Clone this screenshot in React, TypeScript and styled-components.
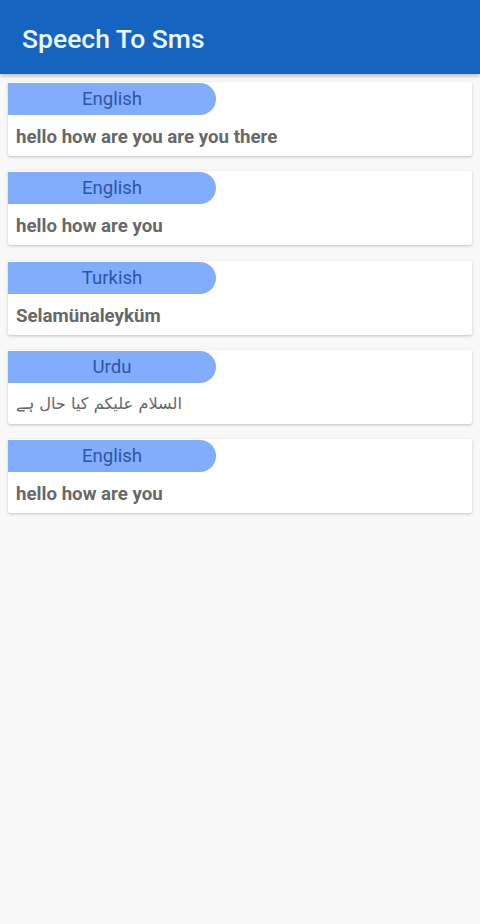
import React from 'react';
import styled, { createGlobalStyle } from 'styled-components';

const GlobalStyle = createGlobalStyle`
  body {
    margin: 0;
    background-color: #f8f8f8;
    font-family: Roboto, "Noto Sans", sans-serif;
  }
`;

const Page = styled.div`
  width: 480px;
  min-height: 924px;
  background-color: #f8f8f8;
`;

const AppBar = styled.header`
  height: 74px;
  display: flex;
  align-items: center;
  padding-left: 22px;
  padding-top: 3px;
  box-sizing: border-box;
  background-color: #1565c0;
  box-shadow: 0 2px 4px rgba(0, 0, 0, 0.25);
  position: relative;
`;

const Title = styled.h1`
  margin: 0;
  font-size: 26.5px;
  font-weight: 500;
  color: #eef6ff;
`;

const List = styled.div`
  display: flex;
  flex-direction: column;
  gap: 15.25px;
  padding: 8px 8px;
`;

const Card = styled.div`
  background-color: #ffffff;
  border-radius: 2px;
  box-shadow: 0 1px 3px rgba(0, 0, 0, 0.22);
  height: 74px;
  padding-top: 1px;
  box-sizing: border-box;
`;

const Pill = styled.div`
  width: 208px;
  height: 32px;
  display: flex;
  align-items: center;
  justify-content: center;
  background-color: #82adfd;
  border-radius: 0 16px 16px 0;
  color: #2f55a6;
  font-size: 18.6px;
`;

const Message = styled.div<{ $rtl?: boolean }>`
  height: 41px;
  display: flex;
  align-items: center;
  padding: ${(p) => (p.$rtl ? '0 8px' : '3px 8px 0')};
  box-sizing: border-box;
  color: #686868;
  font-size: ${(p) => (p.$rtl ? '16.2px' : '18.7px')};
  font-weight: ${(p) => (p.$rtl ? 400 : 700)};
  font-family: ${(p) => (p.$rtl ? '"DejaVu Sans", sans-serif' : 'Roboto, sans-serif')};
  direction: ${(p) => (p.$rtl ? 'rtl' : 'ltr')};
  justify-content: ${(p) => (p.$rtl ? 'flex-end' : 'flex-start')};
`;

const items = [
  { lang: 'English', text: 'hello how are you are you there' },
  { lang: 'English', text: 'hello how are you' },
  { lang: 'Turkish', text: 'Selamünaleyküm' },
  { lang: 'Urdu', text: 'السلام علیکم کیا حال ہے', rtl: true },
  { lang: 'English', text: 'hello how are you' },
];

const App = () => {
  return (
    <Page>
      <GlobalStyle />
      <AppBar>
        <Title>Speech To Sms</Title>
      </AppBar>
      <List>
        {items.map((item, i) => (
          <Card key={i}>
            <Pill>{item.lang}</Pill>
            <Message $rtl={item.rtl}>{item.text}</Message>
          </Card>
        ))}
      </List>
    </Page>
  );
};

export default App;
